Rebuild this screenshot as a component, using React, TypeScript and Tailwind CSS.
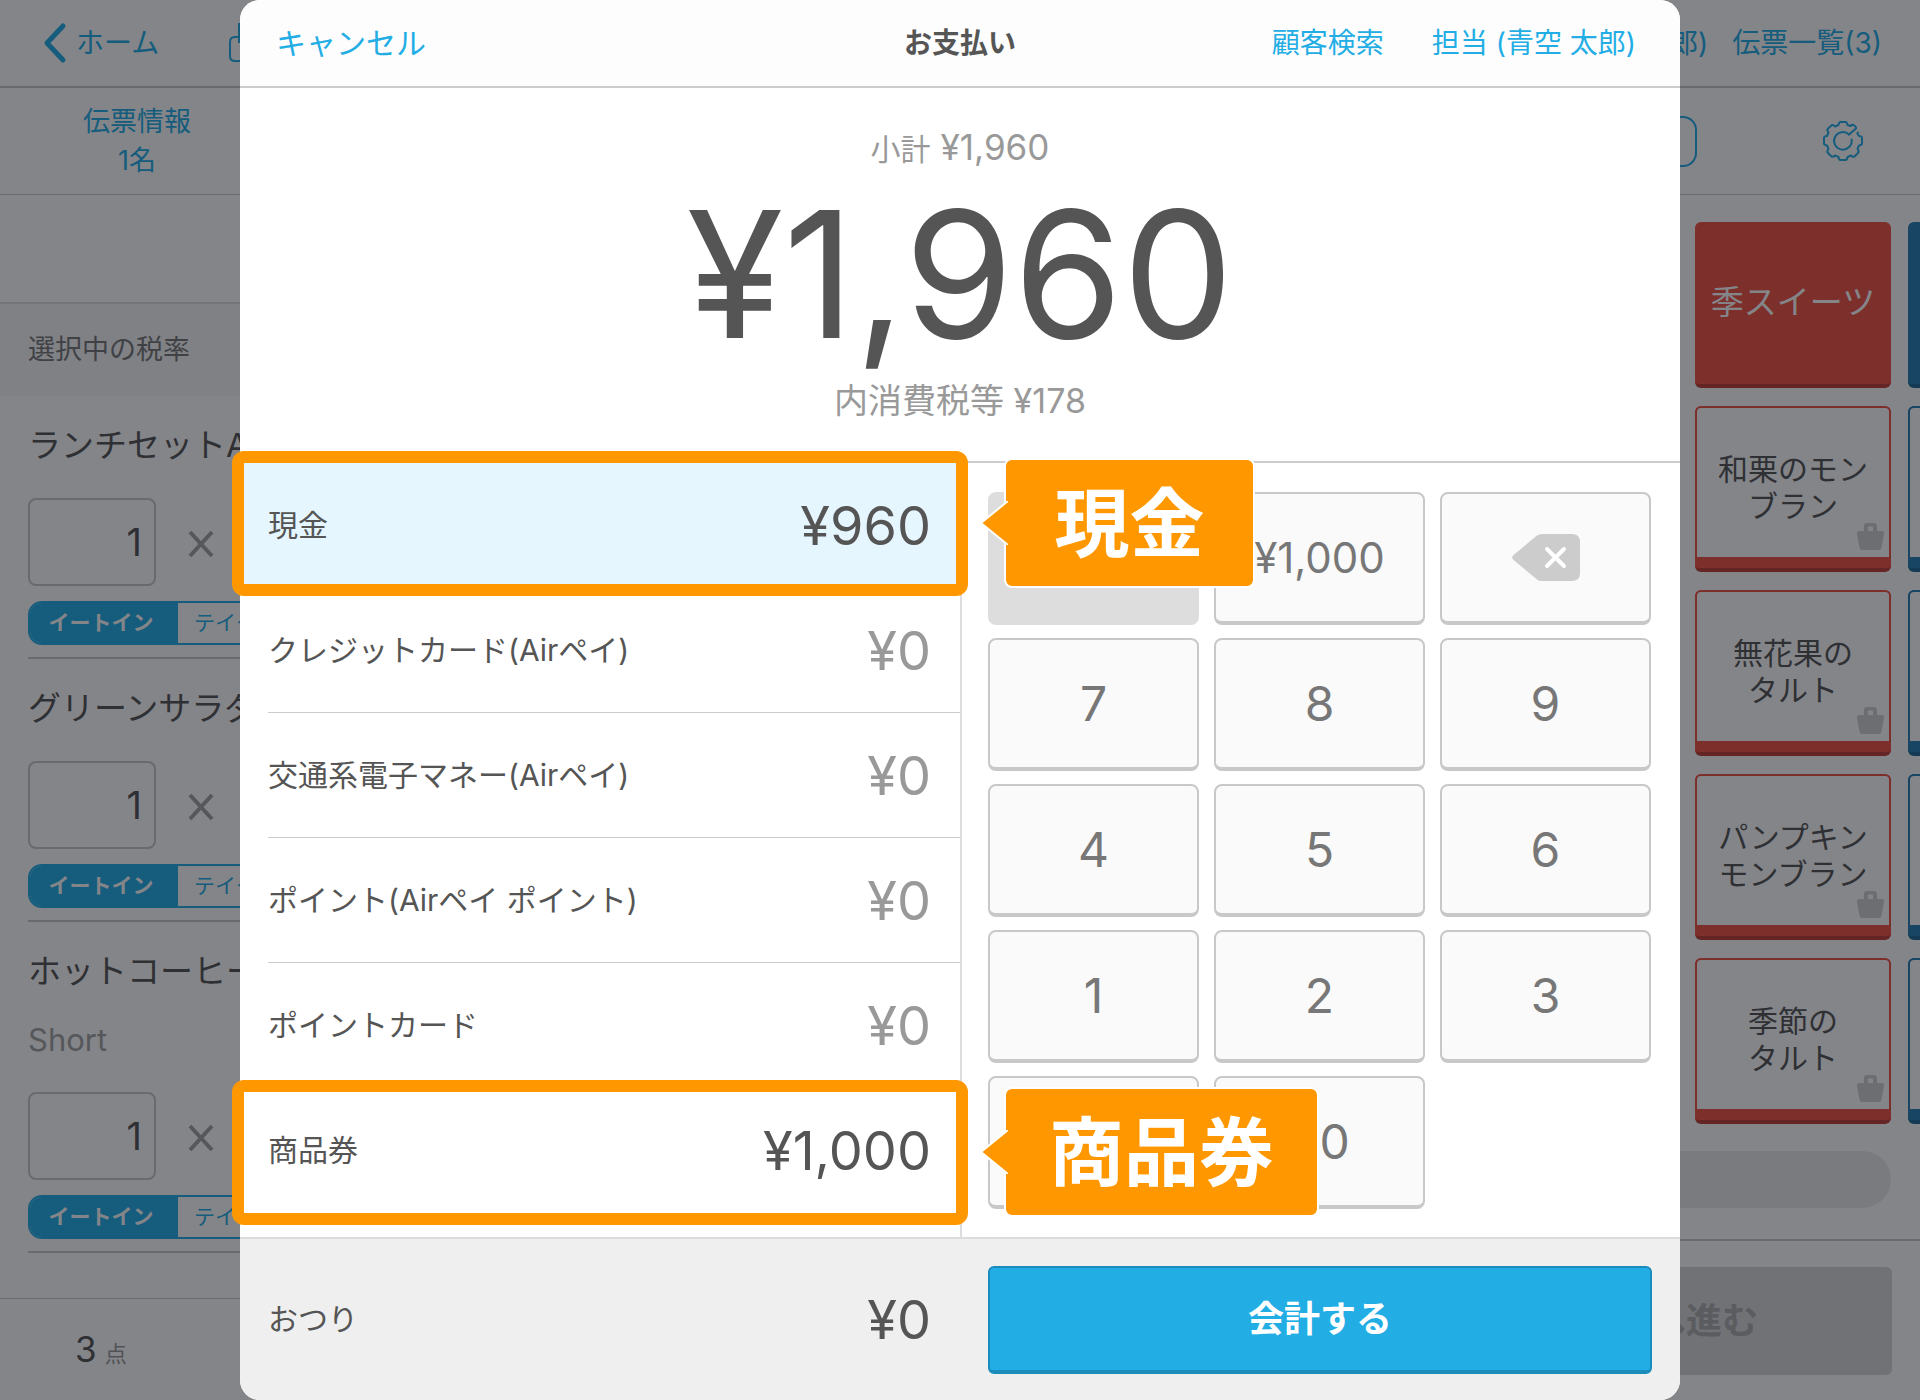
import React from "react";
import clsx from "clsx";

type Item = { name: string; option?: string };
type Payment = { label: string; amount: string; state: "selected" | "filled" | "empty" };

const items: Item[] = [
  { name: "ランチセットA" },
  { name: "グリーンサラダ" },
  { name: "ホットコーヒー", option: "Short" },
];

const products = [
  ["和栗のモン", "ブラン"],
  ["無花果の", "タルト"],
  ["パンプキン", "モンブラン"],
  ["季節の", "タルト"],
];

const payments: Payment[] = [
  { label: "現金", amount: "¥960", state: "selected" },
  { label: "クレジットカード(Airペイ)", amount: "¥0", state: "empty" },
  { label: "交通系電子マネー(Airペイ)", amount: "¥0", state: "empty" },
  { label: "ポイント(Airペイ ポイント)", amount: "¥0", state: "empty" },
  { label: "ポイントカード", amount: "¥0", state: "empty" },
  { label: "商品券", amount: "¥1,000", state: "filled" },
];

const digits = ["7", "8", "9", "4", "5", "6", "1", "2", "3", "0", "00"];

const GearIcon: React.FC = () => (
  <svg width="42" height="42" viewBox="0 0 42 42" fill="none" stroke="currentColor" strokeWidth="2" strokeLinecap="round" strokeLinejoin="round">
    <path d="M27 14.500L34 8.500Q34.500 7 33 6L31.500 5Q30 4.500 28.500 6L25.500 5Q25 2 23.500 2H18.500Q17 2 16.500 5L13 6.500Q11.500 4.500 10 5L6 8.500Q4.500 10 6.500 12.500L5 16Q2 16.300 2 18V23.500Q2 25 5 25.500L6.500 29Q4.500 31.500 6 33L9.500 36.500Q11 37.500 13 35.500L16.500 37Q17 40 18.500 40H23.500Q25 40 25.500 37L29 35.500Q31 37.500 32.500 36.500L36 33Q37.500 31.500 35.500 29L37 25.500Q40 25 40 23.500V18Q40 16.300 37 16L35.500 14Q35 13 36 12.500" />
    <path d="M27 14.500A8.800 8.800 0 1 0 29.600 19.500" />
  </svg>
);

const BagIcon: React.FC = () => (
  <svg width="27" height="27" viewBox="0 0 27 27" fill="currentColor">
    <path
      fillRule="evenodd"
      d="M7 8V3Q7 0 10 0H17Q20 0 20 3V8H25Q27.300 8 27 11L24.500 24.500Q24 27 21.500 27H5.500Q3 27 2.500 24.500L0 11Q-.3 8 2 8ZM11 8H16V4.500Q16 3.500 15 3.500H12Q11 3.500 11 4.500Z"
    />
  </svg>
);

const BackspaceIcon: React.FC = () => (
  <svg width="68" height="48" viewBox="0 0 68 48">
    <path d="M25 1.500Q27 0 30 0H60Q68 0 68 8V39Q68 47 60 47H30Q27 47 25 45.500L1.500 26Q-1 23.500 1.500 21Z" fill="#ccc" />
    <path d="M35 15L52 32M52 15L35 32" stroke="#fff" strokeWidth="4" strokeLinecap="round" />
  </svg>
);

const OrderItem: React.FC<{ item: Item; index: number }> = ({ item, index }) => (
  <li className="ml-7 border-b-2 border-[#c9c9c9] pt-6 pb-3">
    <p className="whitespace-nowrap text-[33px] leading-[50px] text-[#555]">{item.name}</p>
    {item.option && <p className="mt-5 text-[31px] leading-[48px] text-[#a3a3a3]">{item.option}</p>}
    <div className="mt-7 flex items-center">
      <input
        aria-label={`${item.name} 数量 ${index + 1}`}
        defaultValue="1"
        className="h-[88px] w-32 rounded-lg border-2 border-[#c9c9c9] pr-3 text-right text-[38px] text-[#555]"
      />
      <svg className="mt-1 ml-8" width="26" height="28" viewBox="0 0 26 28" stroke="#a3a3a3" strokeWidth="4">
        <path d="M2 2L24 26M24 2L2 26" />
      </svg>
    </div>
    <div className="mt-[15px] flex h-11 w-[310px] overflow-hidden rounded-[14px] border-2 border-[#22ade5] text-[21px]">
      <button className="w-[148px] bg-[#22ade5] pr-1.5 font-bold text-white">イートイン</button>
      <button className="flex-1 pl-4 text-left text-[#22ade5]">テイクアウト</button>
    </div>
  </li>
);

const ProductColumn: React.FC<{ heading: string; labels: string[][]; blue?: boolean }> = ({ heading, labels, blue }) => (
  <div className="flex w-[196px] shrink-0 flex-col gap-[18px]">
    <button
      className={clsx(
        "h-[166px] rounded-md border-b-4 text-[33px] whitespace-nowrap text-white",
        blue ? "border-[#1e6a98] bg-[#287eb6]" : "border-[#be3f35] bg-[#f15242]"
      )}
    >
      {heading}
    </button>
    {labels.map((lines, i) => (
      <button
        key={i}
        className={clsx(
          "flex h-[166px] flex-col overflow-hidden rounded-md border-b-4",
          blue ? "border-[#1e6a98] bg-[#287eb6]" : "border-[#be3f35] bg-[#f15242]"
        )}
      >
        <span
          className={clsx(
            "relative mb-[11px] flex w-full flex-1 flex-col items-center justify-center rounded-t-md border-2 border-b-0 bg-white pt-2.5 text-[30px] leading-[37px] text-[#555]",
            blue ? "border-[#287eb6]" : "border-[#f15242]"
          )}
        >
          {lines.map((line) => (
            <span key={line}>{line}</span>
          ))}
          {!blue && (
            <span className="absolute right-[5px] bottom-[7px] text-[#d0d0d0]">
              <BagIcon />
            </span>
          )}
        </span>
      </button>
    ))}
  </div>
);

const Register: React.FC = () => (
  <div className="flex min-h-screen flex-col bg-white">
    <header className="flex h-[88px] items-center border-b-2 border-[#c8c8c8] px-[38px] text-[28px] text-[#22ade5]">
      <a href="#home" className="flex items-center gap-2 pl-1">
        <svg width="26" height="42" viewBox="0 0 26 42" fill="none" stroke="currentColor" strokeWidth="5" strokeLinecap="round" strokeLinejoin="round">
          <path d="M21 4L5 21L21 38" />
        </svg>
        ホーム
      </a>
      <button aria-label="共有" className="ml-[70px]">
        <svg width="34" height="40" viewBox="0 0 34 40" fill="none" stroke="currentColor" strokeWidth="2">
          <path d="M10 14H6Q1 14 1 19V33Q1 38 6 38H28Q33 38 33 33V19Q33 14 28 14H24M10 19V1H24V19Z" />
        </svg>
      </button>
      <div className="ml-auto flex gap-6">
        <button>担当 (青空 太郎)</button>
        <button>伝票一覧(3)</button>
      </div>
    </header>
    <div className="flex flex-1">
      <section className="flex w-2/5 flex-col">
        <div className="h-[107px] border-b border-[#c8c8c8] pt-3.5">
          <button className="w-[274px] text-[27px] leading-[39px] text-[#22ade5]">
            伝票情報
            <br />
            1名
          </button>
        </div>
        <div className="h-[109px] border-b-2 border-[#dcdcdc]" />
        <p className="h-[92px] bg-[#f6f6f6] pl-7 text-[27px] leading-[92px] text-[#777]">選択中の税率</p>
        <ul className="flex-1">
          {items.map((item, i) => (
            <OrderItem key={item.name} item={item} index={i} />
          ))}
        </ul>
        <div className="flex h-[102px] items-baseline gap-2 border-t border-[#c8c8c8] pt-6 pl-[75px]">
          <span className="text-[35px] text-[#555]">3</span>
          <span className="text-[22px] text-[#999]">点</span>
        </div>
      </section>
      <section className="flex flex-1 flex-col">
        <div className="flex h-[107px] items-center justify-end gap-[125px] border-b border-[#c8c8c8] pr-14 text-[#22ade5]">
          <div className="h-[51px] w-[400px] rounded-[14px] border-2 border-[#22ade5]" />
          <button aria-label="設定">
            <GearIcon />
          </button>
        </div>
        <div className="ml-auto flex w-[225px] gap-[17px] overflow-hidden pt-[27px]">
          <ProductColumn heading="季スイーツ" labels={products} />
          <ProductColumn heading="" labels={[[], [], [], []]} blue />
        </div>
        <div className="mt-[27px] mr-[29px] h-[57px] rounded-full bg-[#ebebeb]" />
        <div className="mt-auto flex h-[161px] items-center justify-end border-t-2 border-[#c8c8c8] pr-7">
          <button className="h-[108px] w-[448px] rounded-md bg-[#d8d8d8] text-4xl font-bold text-[#adadad]">会計へ進む</button>
        </div>
      </section>
    </div>
  </div>
);

const Callout: React.FC<{ label: string; className: string }> = ({ label, className }) => (
  <div className={clsx("absolute -top-[5px] left-full z-10 flex items-center pl-6", className)}>
    <svg className="relative z-10 -mr-1 shrink-0" width="28" height="44" viewBox="0 0 28 44">
      <path d="M28 0L1 22L28 44" fill="#ff9800" stroke="#fff" strokeWidth="2" />
    </svg>
    <span className="flex h-[130px] flex-1 items-center justify-center rounded-lg border-2 border-white bg-[#ff9800] text-[75px] leading-none font-bold whitespace-nowrap text-white">
      {label}
    </span>
  </div>
);

const PaymentRow: React.FC<{ payment: Payment; divider: boolean }> = ({ payment, divider }) => (
  <li className={clsx("relative", payment.state === "selected" && "bg-[#e5f6ff]")}>
    <button
      className={clsx(
        "ml-7 flex h-[125px] w-[calc(100%-28px)] items-center justify-between border-b pr-[29px] text-left",
        divider ? "border-[#ccc]" : "border-transparent"
      )}
    >
      <span className="text-[30px] text-[#555]">{payment.label}</span>
      <span className={clsx("text-[54px]", payment.state === "empty" ? "text-[#999]" : "text-[#555]")}>{payment.amount}</span>
    </button>
    {payment.state !== "empty" && (
      <div
        className={clsx(
          "pointer-events-none absolute -inset-x-2 z-10 h-[145px] rounded-xl border-12 border-[#ff9800]",
          payment.state === "selected" ? "-top-3" : "-top-2"
        )}
      >
        <Callout label={payment.label} className={payment.state === "selected" ? "w-[299px]" : "w-[363px]"} />
      </div>
    )}
  </li>
);

const keyClass = "flex h-[133px] items-center justify-center rounded-lg border-2 border-b-4 border-[#c8c8c8] bg-[#fafafa] text-[#777]";

const PaymentDialog: React.FC = () => (
  <div role="dialog" aria-label="お支払い" className="flex min-h-full w-3/4 flex-col rounded-[20px] bg-white">
    <header className="grid h-[88px] grid-cols-[1fr_auto_1fr] items-center rounded-t-[20px] border-b-2 border-[#ccc] bg-[#fdfdfd] px-9 text-[28px] text-[#22ade5]">
      <button className="justify-self-start text-[30px]">キャンセル</button>
      <h1 className="font-bold text-[#555]">お支払い</h1>
      <div className="flex gap-12 justify-self-end pr-2">
        <button>顧客検索</button>
        <button>担当 (青空 太郎)</button>
      </div>
    </header>

    <section className="flex flex-col items-center border-b-2 border-[#ccc] pt-[35px] pb-9 text-[#999]">
      <p className="flex h-12 items-baseline gap-2.5 text-[30px] leading-[48px]">
        小計 <span className="text-[35px]">¥1,960</span>
      </p>
      <p className="text-[176px] leading-[206px] text-[#555]">¥1,960</p>
      <p className="text-[34px] leading-[48px]">内消費税等 ¥178</p>
    </section>

    <div className="flex flex-1">
      <ul className="w-1/2">
        {payments.map((payment, i) => (
          <PaymentRow key={payment.label} payment={payment} divider={i > 0 && i < payments.length - 1} />
        ))}
      </ul>
      <div className="grid w-1/2 grid-cols-3 content-start gap-x-[15px] gap-y-[13px] border-l-2 border-[#ddd] pt-[29px] pr-[29px] pl-[26px]">
        <button disabled aria-label="ぴったり" className="h-[133px] rounded-lg bg-[#ddd]" />
        <button className={clsx(keyClass, "text-[42px]")}>¥1,000</button>
        <button aria-label="削除" className={keyClass}>
          <BackspaceIcon />
        </button>
        {digits.map((digit) => (
          <button key={digit} className={clsx(keyClass, "text-[48px]")}>
            {digit}
          </button>
        ))}
      </div>
    </div>

    <footer className="flex h-[163px] items-center rounded-b-[20px] border-t-2 border-[#dcdcdc] bg-[#efefef]">
      <div className="flex w-1/2 items-center justify-between pr-[29px] pl-7 text-[#555]">
        <span className="text-[30px]">おつり</span>
        <span className="text-[54px]">¥0</span>
      </div>
      <div className="w-1/2 px-7">
        <button className="h-[108px] w-full rounded-md border-2 border-b-4 border-[#1b8dbd] bg-[#22ade5] text-4xl font-bold text-white">
          会計する
        </button>
      </div>
    </footer>
  </div>
);

const App: React.FC = () => {
  return (
    <main lang="ja" className="relative overflow-hidden font-['Inter','Noto_Sans_CJK_JP',sans-serif]">
      <Register />
      <div className="absolute inset-0 flex justify-center bg-[rgb(9_11_19/0.5)]">
        <PaymentDialog />
      </div>
    </main>
  );
};

export default App;
